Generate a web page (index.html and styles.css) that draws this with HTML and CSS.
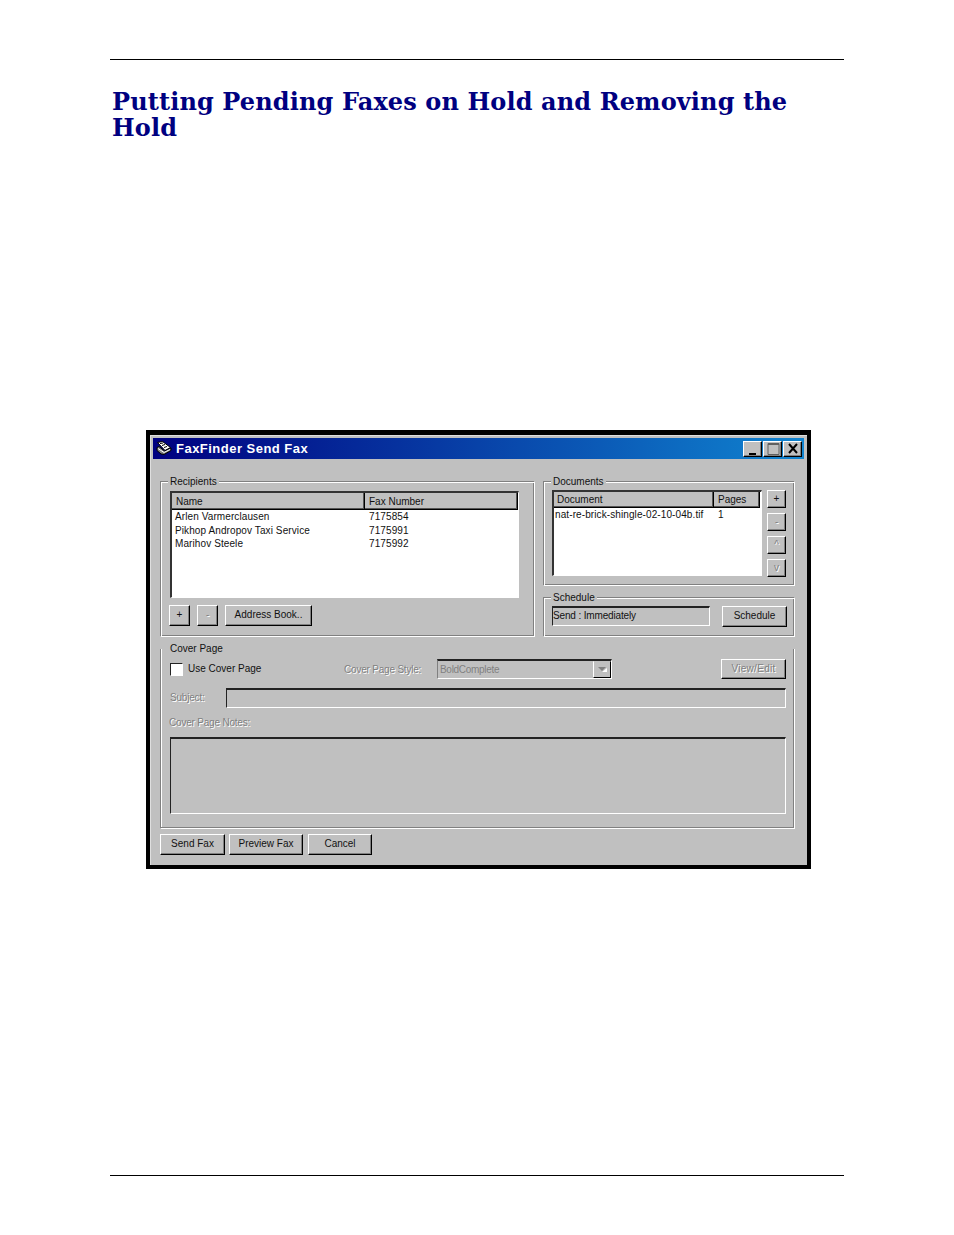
FILE: index.html
```html
<!DOCTYPE html>
<html lang="en">
<head>
    <meta charset="UTF-8">
    <title>Putting Pending Faxes on Hold and Removing the Hold</title>
    <link rel="stylesheet" href="styles.css">
</head>
<body>
    <div class="rule"></div>
    <h1>Putting Pending Faxes on Hold and Removing the Hold</h1>

    <div class="window">
        <div class="titlebar">
            <svg class="app-icon" width="16" height="15" viewBox="0 0 16 15">
                <path d="M1.5 1.5 L6.5 .5 L14.5 6.5 L9 9.5 Z" fill="#fff" stroke="#000"/>
                <path d="M4 2.5 L7 2 M6 4.5 L9 3.5 M8 6.5 L11 5.5" stroke="#000"/>
                <path d="M1 6.5 L3 5.5 L8.5 10 L15 7 L15 9.5 L8 13.5 L5 13 L1 9.5 Z" fill="#808080" stroke="#000"/>
                <path d="M2 7.5 L8 11.5 L14 8.5" fill="none" stroke="#fff"/>
            </svg>
            <span class="title-text">FaxFinder Send Fax</span>
            <div class="win-controls">
                <button class="win-btn">
                    <svg width="14" height="12" viewBox="0 0 14 12"><path d="M3 10h7v2H3z" fill="#000"/></svg>
                </button>
                <button class="win-btn max">
                    <svg width="14" height="12" viewBox="0 0 14 12"><path d="M2 .5h11v11H2zM2 1.5h11" fill="none" stroke="#606060"/></svg>
                </button>
                <button class="win-btn close">
                    <svg width="14" height="12" viewBox="0 0 14 12"><path d="M3 1l8 9M11 1l-8 9" fill="none" stroke="#000" stroke-width="2"/></svg>
                </button>
            </div>
        </div>

        <div class="win-body">
            <div class="top-row">
                <div class="group recipients">
                    <span class="group-label">Recipients</span>
                    <div class="list recipient-list">
                        <div class="list-head">
                            <div class="head-cell name-col">Name</div>
                            <div class="head-cell fax-col">Fax Number</div>
                        </div>
                        <div class="list-row"><span class="name-col">Arlen Varmerclausen</span><span>7175854</span></div>
                        <div class="list-row"><span class="name-col">Pikhop Andropov Taxi Service</span><span>7175991</span></div>
                        <div class="list-row"><span class="name-col">Marihov Steele</span><span>7175992</span></div>
                    </div>
                    <div class="btn-row">
                        <button class="btn plus">+</button>
                        <button class="btn plus disabled">-</button>
                        <button class="btn address">Address Book..</button>
                    </div>
                </div>

                <div class="right-col">
                    <div class="group documents">
                        <span class="group-label">Documents</span>
                        <div class="list doc-list">
                            <div class="list-head">
                                <div class="head-cell doc-col">Document</div>
                                <div class="head-cell pages-col">Pages</div>
                            </div>
                            <div class="list-row doc-row"><span class="doc-col">nat-re-brick-shingle-02-10-04b.tif</span><span>1</span></div>
                        </div>
                        <div class="doc-btns">
                            <button class="btn small">+</button>
                            <button class="btn small disabled">-</button>
                            <button class="btn small disabled">^</button>
                            <button class="btn small disabled">v</button>
                        </div>
                    </div>
                    <div class="group schedule">
                        <span class="group-label">Schedule</span>
                        <div class="sunken send-field">Send : Immediately</div>
                        <button class="btn schedule-btn">Schedule</button>
                    </div>
                </div>
            </div>

            <div class="group cover">
                <span class="group-label">Cover Page</span>
                <div class="cover-row">
                    <span class="checkbox"></span>
                    <span class="use-cover">Use Cover Page</span>
                    <span class="style-label disabled">Cover Page Style:</span>
                    <div class="combo">
                        <span class="combo-text">BoldComplete</span>
                        <span class="combo-btn">
                            <svg width="9" height="6" viewBox="0 0 9 6"><path d="M4 5L9 1v4z" fill="#fff"/><path d="M0 0h8L4 4z" fill="#808080"/></svg>
                        </span>
                    </div>
                    <button class="btn view-btn disabled">View/Edit</button>
                </div>
                <div class="subject-row">
                    <span class="subject-label disabled">Subject:</span>
                    <div class="sunken flat subject-input"></div>
                </div>
                <div class="notes-label disabled">Cover Page Notes:</div>
                <div class="sunken flat notes"></div>
            </div>

            <div class="bottom-row">
                <button class="btn send">Send Fax</button>
                <button class="btn preview">Preview Fax</button>
                <button class="btn cancel">Cancel</button>
            </div>
        </div>
    </div>

    <div class="rule bottom-rule"></div>
</body>
</html>
```

FILE: styles.css
```css
body {
    margin: 0;
    padding: 59px 110px 0;
    background-color: #fff;
    font-family: "Liberation Sans", Arial, sans-serif;
}

.rule {
    height: 1px;
    background-color: #000;
}

.bottom-rule {
    margin-top: 306px;
}

h1 {
    max-width: 700px;
    margin: 29px 0 289px 2px;
    font-family: "DejaVu Serif", serif;
    font-size: 24px;
    font-weight: bold;
    line-height: 26px;
    letter-spacing: 0.12px;
    color: #000080;
}

/* Window */
.window {
    box-sizing: border-box;
    width: 665px;
    height: 439px;
    margin-left: 36px;
    padding: 3px;
    border: 4px solid #000;
    border-top-width: 5px;
    background-color: #c0c0c0;
    box-shadow: inset 1px 1px 0 #dfdfdf;
    font-size: 10px;
    color: #111;
}

.titlebar {
    display: flex;
    align-items: center;
    height: 21px;
    padding: 0 2px 0 3px;
    background: linear-gradient(to right, #000080, #1084d0);
}

.app-icon {
    margin-right: 4px;
}

.title-text {
    font-size: 13px;
    font-weight: bold;
    letter-spacing: 0.48px;
    color: #fff;
}

.win-controls {
    display: flex;
    margin-left: auto;
    gap: 1px;
}

.win-btn {
    box-sizing: border-box;
    display: flex;
    align-items: center;
    justify-content: center;
    width: 19px;
    height: 16px;
    padding: 0;
    border: 1px solid;
    border-color: #fff #000 #000 #fff;
    background-color: #c0c0c0;
    box-shadow: inset -1px -1px 0 #808080;
}

.win-body {
    padding: 22px 0 0 7px;
}

.top-row {
    display: flex;
    gap: 8px;
}

.right-col {
    display: flex;
    flex-direction: column;
    gap: 11px;
    width: 252px;
}

/* Etched group boxes */
.group {
    box-sizing: border-box;
    position: relative;
    border: 1px solid;
    border-color: #808080 #fff #fff #808080;
    box-shadow: inset 1px 1px 0 #fff, inset -1px -1px 0 #808080;
}

.group-label {
    position: absolute;
    top: -7px;
    left: 7px;
    padding: 0 2px;
    line-height: 13px;
    background-color: #c0c0c0;
}

.recipients {
    width: 375px;
    height: 156px;
    padding: 9px;
}

.documents {
    display: flex;
    gap: 5px;
    height: 105px;
    padding: 8px;
}

.schedule {
    display: flex;
    justify-content: space-between;
    height: 40px;
    padding: 8px 7px 0 8px;
}

/* Lists */
.list {
    box-sizing: border-box;
    border: 1px solid;
    border-color: #333 #fff #fff #333;
    border-top-width: 2px;
    border-left-width: 2px;
    background-color: #fff;
}

.recipient-list {
    width: 349px;
    height: 107px;
}

.doc-list {
    width: 211px;
    height: 86px;
}

.list-head {
    display: flex;
}

.head-cell {
    box-sizing: border-box;
    height: 17px;
    padding: 1px 0 0 4px;
    line-height: 15px;
    border-right: 1px solid #000;
    border-bottom: 1px solid #000;
    background-color: #c0c0c0;
    box-shadow: inset -1px -1px 0 #555;
}

.name-col {
    width: 193px;
    flex: none;
}

.fax-col {
    width: 153px;
}

.doc-col {
    width: 160px;
    flex: none;
}

.doc-list .head-cell {
    height: 16px;
    padding-top: 0;
}

.doc-list .head-cell.doc-col {
    padding-left: 3px;
}

.pages-col {
    width: 46px;
}

.list-row {
    display: flex;
    height: 13.5px;
    padding-left: 3px;
    line-height: 13.5px;
    letter-spacing: 0.1px;
    white-space: nowrap;
}

.list-row .name-col {
    margin-right: -4px;
    padding-right: 5px;
}

.doc-row {
    padding-left: 1px;
}

.doc-row .doc-col {
    width: 163px;
}

/* Buttons */
.btn {
    box-sizing: border-box;
    height: 21px;
    padding: 0 0 2px;
    border: 1px solid;
    border-color: #fff #000 #000 #fff;
    background-color: #c0c0c0;
    box-shadow: inset -1px -1px 0 #808080;
    font-family: inherit;
    font-size: 10px;
    color: #111;
}

.btn-row {
    display: flex;
    margin: 7px 0 0 -1px;
}

.plus {
    width: 21px;
    margin-right: 7px;
}

.address {
    width: 87px;
}

.doc-btns {
    display: flex;
    flex-direction: column;
    gap: 5px;
}

.small {
    width: 19px;
    height: 18px;
}

.schedule-btn {
    width: 65px;
}

.send {
    width: 65px;
}

.preview {
    width: 74px;
    margin-right: 1px;
}

.cancel {
    width: 64px;
}

.disabled,
.btn.disabled {
    letter-spacing: -0.2px;
    color: #808080;
    text-shadow: 1px 1px 0 #fff;
}

/* Sunken fields */
.sunken {
    box-sizing: border-box;
    border: 1px solid;
    border-color: #222 #fff #fff #222;
    border-top-width: 2px;
}

.flat {
    border-left-width: 1px;
}

.send-field {
    width: 158px;
    height: 20px;
    line-height: 16px;
    letter-spacing: -0.15px;
}

/* Cover page */
.cover {
    width: 635px;
    height: 180px;
    margin-top: 12px;
    padding: 10px 8px 0 9px;
    border-top: 0;
    box-shadow: inset -1px -1px 0 #808080, inset 1px 0 0 #fff;
}

.cover-row {
    display: flex;
    align-items: center;
    height: 20px;
}

.checkbox {
    box-sizing: border-box;
    width: 13px;
    height: 13px;
    margin-right: 5px;
    border: 1px solid;
    border-color: #222 #fff #fff #222;
    background-color: #fff;
}

.use-cover {
    width: 156px;
    padding-bottom: 2px;
}

.style-label {
    width: 93px;
}

.combo {
    box-sizing: border-box;
    display: flex;
    justify-content: space-between;
    width: 175px;
    height: 20px;
    border: 1px solid;
    border-color: #222 #fff #fff #808080;
    border-top-width: 2px;
    letter-spacing: -0.3px;
    color: #808080;
}

.combo-text {
    padding-left: 2px;
    line-height: 17px;
}

.combo-btn {
    box-sizing: border-box;
    display: flex;
    align-items: center;
    justify-content: center;
    width: 18px;
    border: 1px solid;
    border-color: #c0c0c0 #000 #000 #fff;
}

.btn.view-btn {
    width: 65px;
    height: 20px;
    margin-left: auto;
    letter-spacing: 0.3px;
}

.subject-row {
    display: flex;
    align-items: center;
    margin-top: 9px;
}

.subject-label {
    width: 56px;
    margin-left: -1px;
    padding: 0 0 2px 1px;
}

.subject-input {
    flex: 1;
    height: 20px;
}

.notes-label {
    margin: 8px 0 0 -1px;
    line-height: 14px;
}

.notes {
    height: 77px;
    margin-top: 7px;
}

.bottom-row {
    display: flex;
    gap: 4px;
    margin-top: 5px;
}
```
